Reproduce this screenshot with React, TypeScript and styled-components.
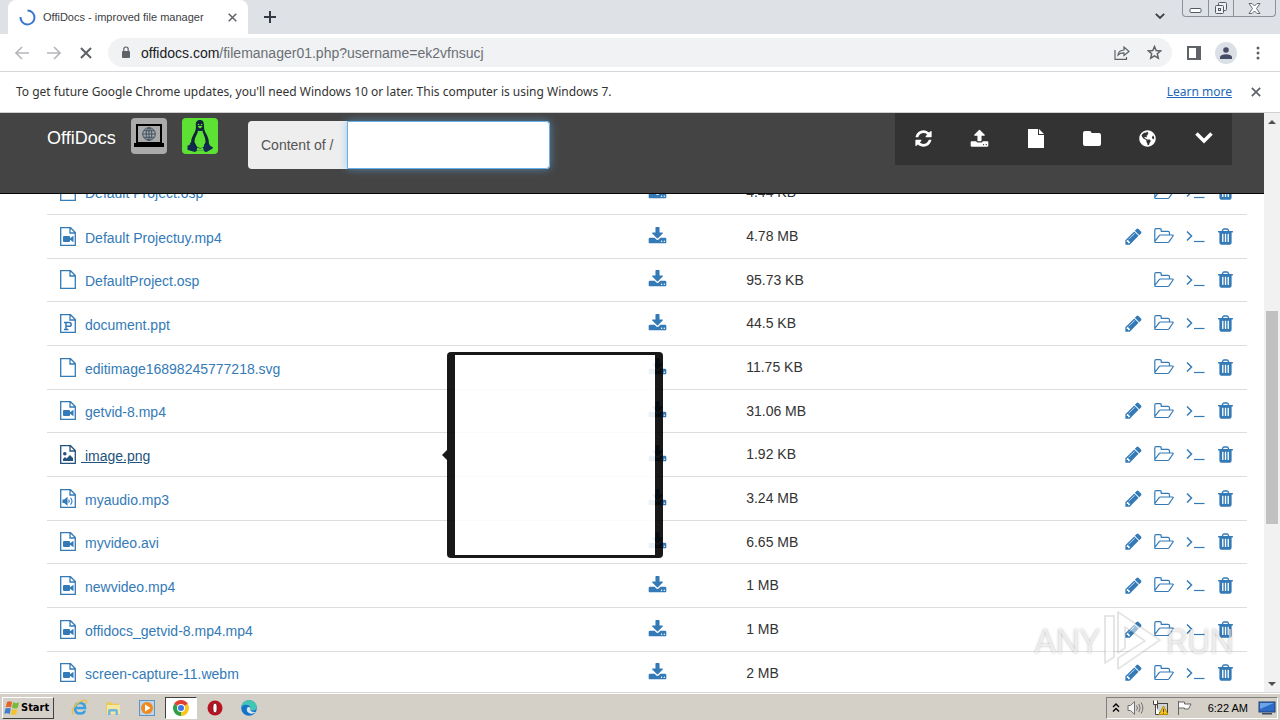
import React from "react";
import styled, { createGlobalStyle, css } from "styled-components";
import { FaGlobeAmericas } from "react-icons/fa";

const UI_FONT = '"Noto Sans", "Open Sans", sans-serif';
const PAGE_FONT = '"Liberation Sans", Arial, sans-serif';

const GlobalStyle = createGlobalStyle`
  *, *::before, *::after { box-sizing: border-box; }
  body { margin: 0; background: #fff; overflow: hidden; }
  button, input { font: inherit; }
  svg { display: block; flex: none; }
`;

const Desktop = styled.div`
  position: relative;
  display: flex;
  flex-direction: column;
  height: 100vh;
  font-family: ${PAGE_FONT};
  font-size: 12px;
  color: #333;
`;

/* ---------- Browser window ---------- */

const TabStrip = styled.header`
  display: flex;
  align-items: stretch;
  height: 34px;
  padding-left: 8px;
  background: #dee1e6;
`;

const Tab = styled.div`
  display: flex;
  align-items: center;
  width: 240px;
  margin-right: 5px;
  padding: 0 8px 0 11px;
  border-radius: 8px 8px 0 0;
  background: #fff;
  color: #3c4043;
  font-size: 11px;
`;

const TabTitle = styled.span`
  flex: 1;
  margin-left: 7px;
  white-space: nowrap;
`;

const IconButton = styled.button<{ $size?: number }>`
  display: inline-flex;
  align-items: center;
  justify-content: center;
  width: ${(p) => p.$size ?? 32}px;
  height: ${(p) => p.$size ?? 32}px;
  padding: 0;
  border: 0;
  background: none;
  color: #5f6368;
`;

const TabSpacer = styled.div`
  flex: 1;
`;

const WindowControls = styled.div`
  display: flex;
  height: 17px;
  margin: 0 4px 0 6px;
  border: 1px solid #8c9097;
  border-top: 0;
  border-radius: 0 0 4px 4px;
`;

const WindowButton = styled.button<{ $wide?: boolean }>`
  display: flex;
  align-items: center;
  justify-content: center;
  width: ${(p) => (p.$wide ? 42 : 25)}px;
  padding: 0;
  border: 0;
  background: none;
  & + & { border-left: 1px solid #8c9097; }
`;

const Toolbar = styled.nav`
  display: flex;
  align-items: center;
  height: 38px;
  padding: 0 6px;
  border-bottom: 1px solid #d5d7da;
  background: #fff;
`;

const AddressBar = styled.div`
  display: flex;
  flex: 1;
  align-items: center;
  height: 29px;
  margin: 0 6px 0 6px;
  padding: 0 2px 0 13px;
  border-radius: 15px;
  background: #f0f2f4;
`;

const AddressText = styled.span`
  flex: 1;
  margin-left: 10px;
  color: #6b6f74;
  font-size: 14px;
  b { color: #202124; font-weight: 400; }
`;

const Avatar = styled.span`
  display: flex;
  align-items: center;
  justify-content: center;
  width: 22px;
  height: 22px;
  border-radius: 50%;
  background: #dbdfe6;
`;

const InfoBar = styled.div`
  display: flex;
  align-items: center;
  height: 41px;
  padding: 0 8px 1px 16px;
  border-bottom: 1px solid #d0d0d0;
  background: #fff;
  font-family: ${UI_FONT};
`;

const InfoText = styled.p`
  flex: 1;
  margin: 0;
`;

const InfoLink = styled.a`
  margin-right: 8px;
  color: #2267b5;
`;

const Viewport = styled.div`
  display: flex;
  flex: 1;
  min-height: 0;
  border-bottom: 1px solid #d8d8d8;
`;

const Page = styled.main`
  display: flex;
  flex: 1;
  flex-direction: column;
  min-width: 0;
  background: #fff;
  font-size: 14px;
`;

/* ---------- File manager ---------- */

const PageHeader = styled.div`
  display: flex;
  align-items: flex-start;
  flex: none;
  height: 81px;
  padding: 0 32px 0 47px;
  border-bottom: 1px solid #080808;
  background: #444;
`;

const Brand = styled.a`
  width: 84px;
  margin-top: 15px;
  color: #fff;
  font-size: 18px;
  line-height: 21px;
  text-decoration: none;
`;

const AppTile = styled.a<{ $color: string }>`
  display: flex;
  align-items: center;
  justify-content: center;
  width: 36px;
  height: 36px;
  margin: 5px 15px 0 0;
  border-radius: 4px;
  background: ${(p) => p.$color};
`;

const PathGroup = styled.label`
  display: flex;
  height: 48px;
  margin: 8px auto 0 15px;
  border-radius: 4px;
  background: #eee;
  color: #555;
  line-height: 48px;
`;

const PathLabel = styled.span`
  width: 99px;
  padding-left: 13px;
  white-space: nowrap;
`;

const PathInput = styled.input`
  width: 203px;
  padding: 0 12px;
  border: 1px solid #66afe9;
  border-radius: 0 4px 4px 0;
  background: #fff;
  box-shadow: 0 0 8px rgba(102, 175, 233, 0.6);
  outline: 0;
`;

const ToolGroup = styled.div`
  display: flex;
  height: 52px;
  padding-left: 1px;
  background: #333;
`;

const ToolButton = styled.button`
  display: flex;
  align-items: center;
  justify-content: center;
  width: 56px;
  padding: 0 1px 2px 0;
  border: 0;
  background: none;
  color: #fff;
`;

const ListArea = styled.div`
  flex: 1;
  min-height: 0;
  padding: 0 17px 0 47px;
  overflow: hidden;
`;

const FileTable = styled.table`
  width: 100%;
  margin-top: -24px;
  border-collapse: collapse;
  table-layout: fixed;
`;

const Row = styled.tr`
  height: 44px;
  border-bottom: 1px solid #ddd;
  &:nth-child(3n) { height: 43px; }
`;

const Cell = styled.td<{ $width: string }>`
  position: relative;
  width: ${(p) => p.$width};
  padding: 0 8px;
  color: #333;
`;

const linkIcon = css`
  display: flex;
  align-items: center;
  width: max-content;
  padding: 0;
  border: 0;
  background: none;
  color: #337ab7;
`;

const FileLink = styled.a<{ $hover?: boolean }>`
  ${linkIcon}
  gap: ${(p) => (p.$hover ? 5 : 9)}px;
  padding-left: 5px;
  color: ${(p) => (p.$hover ? "#23527c" : "#337ab7")};
  text-decoration: none;
  span {
    padding-top: 3px;
    white-space: pre;
    text-decoration: ${(p) => (p.$hover ? "underline" : "none")};
  }
`;

const DownloadLink = styled.a`
  ${linkIcon}
`;

const Actions = styled.div`
  display: flex;
  align-items: center;
  justify-content: flex-end;
  gap: 11px;
  padding-right: 4px;
`;

const ActionButton = styled.button`
  ${linkIcon}
`;

const Preview = styled.div`
  position: absolute;
  top: calc(50% + 1px);
  left: 400px;
  z-index: 1;
  padding: 3px 8px;
  border-radius: 4px;
  background: #000;
  opacity: 0.9;
  transform: translateY(-50%);
  &::before {
    content: "";
    position: absolute;
    top: 50%;
    left: -5px;
    margin-top: -5px;
    border: 5px solid transparent;
    border-left: 0;
    border-right-color: #000;
  }
`;

const PreviewImage = styled.div`
  width: 200px;
  height: 200px;
  background: #fff;
`;

const Scrollbar = styled.div`
  display: flex;
  flex-direction: column;
  align-items: center;
  width: 16px;
  background: #f1f1f1;
`;

const ScrollArrow = styled.button`
  display: flex;
  align-items: center;
  justify-content: center;
  height: 17px;
  padding: 0;
  border: 0;
  background: none;
`;

const ScrollSpace = styled.div<{ $share: number }>`
  flex: ${(p) => p.$share} 0 0;
`;

const ScrollThumb = styled(ScrollSpace)`
  width: 12px;
  background: #c1c1c1;
`;

const Watermark = styled.div`
  position: absolute;
  right: 46px;
  bottom: 46px;
  z-index: 2;
  display: flex;
  align-items: center;
  gap: 3px;
  color: rgba(255, 255, 255, 0.6);
  font-family: Roboto, "Liberation Sans", sans-serif;
  font-size: 34px;
  font-weight: 300;
  line-height: 66px;
  text-shadow: 0 0 3px rgba(0, 0, 0, 0.3);
  pointer-events: none;
`;

/* ---------- Taskbar ---------- */

const Taskbar = styled.footer`
  display: flex;
  align-items: center;
  height: 27px;
  padding: 2px 2px 1px;
  border-top: 1px solid #fff;
  background: #d4d0c8;
  color: #000;
`;

const StartButton = styled.button`
  display: flex;
  align-items: center;
  gap: 1px;
  height: 22px;
  width: 52px;
  margin-right: 9px;
  padding: 0 1px;
  border: 1px solid;
  border-color: #fff #404040 #404040 #fff;
  background: #d4d0c8;
  font-family: "DejaVu Sans Condensed", "DejaVu Sans", sans-serif;
  font-size: 11px;
  font-weight: 700;
  color: #000;
`;

const TaskButton = styled.button<{ $active?: boolean }>`
  display: flex;
  align-items: center;
  justify-content: center;
  width: 32px;
  height: 22px;
  margin-right: 2px;
  padding: 0;
  border: 1px solid transparent;
  background: none;
  ${(p) =>
    p.$active &&
    css`
      border-color: #404040 #fff #fff #404040;
      background: #fff;
    `}
`;

const Tray = styled.div`
  display: flex;
  align-items: center;
  gap: 7px;
  height: 22px;
  margin-left: auto;
  padding: 0 1px 0 5px;
  border: 1px solid;
  border-color: #808080 #fff #fff #808080;
`;

const Clock = styled.time`
  margin: 0 3px 0 8px;
  font-size: 11px;
  white-space: nowrap;
`;

/* ---------- Icons ---------- */

const paths = {
  refresh:
    "M1639 1056q0 5-1 7-64 268-268 434.500t-478 166.500q-146 0-282.500-55t-243.500-157l-129 129q-19 19-45 19t-45-19-19-45v-448q0-26 19-45t45-19h448q26 0 45 19t19 45-19 45l-137 137q71 66 161 102t187 36q134 0 250-65t186-179q11-17 53-117 8-23 30-23h192q13 0 22.500 9.500t9.500 22.500zm25-800v448q0 26-19 45t-45 19h-448q-26 0-45-19t-19-45 19-45l138-138q-148-137-349-137-134 0-250 65t-186 179q-11 17-53 117-8 23-30 23h-199q-13 0-22.500-9.500t-9.500-22.500v-7q65-268 270-434.500t480-166.500q146 0 284 55.500t245 156.500l130-129q19-19 45-19t45 19 19 45z",
  upload:
    "M1344 1472q0-26-19-45t-45-19-45 19-19 45 19 45 45 19 45-19 19-45zm256 0q0-26-19-45t-45-19-45 19-19 45 19 45 45 19 45-19 19-45zm128-224v320q0 40-28 68t-68 28h-1472q-40 0-68-28t-28-68v-320q0-40 28-68t68-28h427q21 56 70.500 92t110.500 36h256q61 0 110.500-36t70.500-92h427q40 0 68 28t28 68zm-325-648q-17 40-59 40h-256v448q0 26-19 45t-45 19h-256q-26 0-45-19t-19-45v-448h-256q-42 0-59-40-17-39 14-69l448-448q18-19 45-19t45 19l448 448q31 30 14 69z",
  download:
    "M1344 1344q0-26-19-45t-45-19-45 19-19 45 19 45 45 19 45-19 19-45zm256 0q0-26-19-45t-45-19-45 19-19 45 19 45 45 19 45-19 19-45zm128-224v320q0 40-28 68t-68 28h-1472q-40 0-68-28t-28-68v-320q0-40 28-68t68-28h465l135 136q58 56 136 56t136-56l136-136h464q40 0 68 28t28 68zm-325-569q17 41-14 70l-448 448q-18 19-45 19t-45-19l-448-448q-31-29-14-70 17-39 59-39h256v-448q0-26 19-45t45-19h256q26 0 45 19t19 45v448h256q42 0 59 39z",
  pencil:
    "M491 1536l91-91-235-235-91 91v107h128v128h107zm523-928q0-22-22-22-10 0-17 7l-542 542q-7 7-7 17 0 22 22 22 10 0 17-7l542-542q7-7 7-17zm-54-192l416 416-832 832h-416v-416zm683 96q0 53-37 90l-166 166-416-416 166-165q36-38 90-38 53 0 91 38l235 234q37 39 37 91z",
  trash:
    "M704 1376v-704q0-14-9-23t-23-9h-64q-14 0-23 9t-9 23v704q0 14 9 23t23 9h64q14 0 23-9t9-23zm256 0v-704q0-14-9-23t-23-9h-64q-14 0-23 9t-9 23v704q0 14 9 23t23 9h64q14 0 23-9t9-23zm256 0v-704q0-14-9-23t-23-9h-64q-14 0-23 9t-9 23v704q0 14 9 23t23 9h64q14 0 23-9t9-23zm-544-992h448l-48-117q-7-9-17-11h-317q-10 2-17 11zm928 32v64q0 14-9 23t-23 9h-96v948q0 83-47 143.500t-113 60.500h-832q-66 0-113-58.500t-47-141.500v-952h-96q-14 0-23-9t-9-23v-64q0-14 9-23t23-9h309l70-167q15-37 54-63t79-26h320q40 0 79 26t54 63l70 167h309q14 0 23 9t9 23z",
};

const Glyph = ({ name }: { name: keyof typeof paths }) => (
  <svg width="19" height="19" viewBox="0 0 1792 1792" fill="currentColor" aria-hidden="true">
    <path d={paths[name]} />
  </svg>
);

const FolderOpenIcon = () => (
  <svg width="21" height="16" viewBox="0 0 21 16" fill="none" stroke="currentColor" strokeWidth="1.2" strokeLinejoin="round" aria-hidden="true">
    <path d="M.8 14V2Q.8.7 2 .7H6Q7.200.7 7.200 2V3.300H14Q15.500 3.300 15.500 5V7M.8 13.500 5 7.800Q5.600 7 6.500 7H18.500Q19.700 7 19 8L15.500 13.200Q14.700 14.500 13.500 14.500H1.800Q.8 14.500.8 13.500" />
  </svg>
);

const TerminalIcon = () => (
  <svg width="19" height="14" viewBox="0 0 19 14" fill="none" stroke="currentColor" strokeWidth="1.5" aria-hidden="true">
    <path d="M1 2.500 5.500 7 1 11.500" />
    <path d="M8 12.500H18.500" strokeWidth="1.200" />
  </svg>
);

type Kind = "file" | "video" | "image" | "audio" | "slides";

const FileIcon = ({ kind }: { kind: Kind }) => (
  <svg width="16" height="19" viewBox="0 0 16 19" fill="none" stroke="currentColor" strokeWidth="1.300" aria-hidden="true">
    <path d="M.7.7H10.500L15.300 5.500V18.300H.7ZM10 .7V6H15.300" />
    {kind === "video" && (
      <g fill="currentColor" stroke="none">
        <rect x="3" y="9" width="7" height="6" rx="1" />
        <path d="M9 12 13.500 8.800V15.200Z" />
      </g>
    )}
    {kind === "image" && (
      <g fill="currentColor" stroke="none">
        <circle cx="4.800" cy="8.800" r="1.800" />
        <path d="M3 16V14L5 12 6.500 13.500 10 10 13 13V16Z" />
      </g>
    )}
    {kind === "audio" && (
      <g strokeWidth="1.100">
        <path d="M3 11H4.500L7 9V15.500L4.500 13.500H3Z" fill="currentColor" />
        <path d="M8.600 10.600Q10 12.200 8.600 13.900M10.500 8.800Q13.500 12.200 10.500 15.700" />
      </g>
    )}
    {kind === "slides" && (
      <path d="M4 8.500H9Q11.200 8.500 11.200 10.400T9 12.300H6.500M6 8.500V15.500M4 15.500H8.500" strokeWidth="1.500" />
    )}
  </svg>
);

const CrossIcon = ({ size = 9 }: { size?: number }) => (
  <svg width={size} height={size} viewBox="0 0 10 10" stroke="currentColor" strokeWidth="1.700" aria-hidden="true">
    <path d="M.8.8 9.200 9.200M9.200.8.8 9.200" />
  </svg>
);

const ArrowIcon = ({ back }: { back?: boolean }) => (
  <svg width="14" height="14" viewBox="0 0 14 14" fill="none" stroke="#b5b7ba" strokeWidth="1.600" aria-hidden="true">
    <path d={back ? "M14 7H1M7 1 1 7 7 13" : "M0 7H13M7 1 13 7 7 13"} />
  </svg>
);

const LaptopIcon = () => (
  <svg width="30" height="26" viewBox="0 0 30 26" fill="none" aria-hidden="true">
    <rect x="3" y="2" width="24" height="18" stroke="#000" strokeWidth="2" />
    <path d="M0 20H30V24H0Z" fill="#000" />
    <g stroke="#3d5060" strokeWidth="1">
      <circle cx="15" cy="11" r="6.300" />
      <ellipse cx="15" cy="11" rx="2.800" ry="6.300" />
      <path d="M15 4.700V17.300M8.700 11H21.300M9.800 7.800H20.200M9.800 14.200H20.200" />
    </g>
  </svg>
);

const PenguinIcon = () => (
  <svg width="28" height="34" viewBox="0 0 28 34" aria-hidden="true">
    <path d="M14 1C10.500 1 9.500 3.500 9.900 7 10.200 11 9 12.500 7.200 16 5.500 19.200 5 21.500 5.200 24L9 31.500H19.500L22.800 25C23.200 21.500 22 18 20.200 14.800 18.600 12 18 10.500 18 7 18 3 17 1 14 1Z" fill="#10243a" />
    <path d="M12 11.500Q14 12.500 16.400 11.500C17 15 19.500 18 19.500 23L17.500 28Q14 30 10.800 27.500L8.500 23C8.500 18 11.500 16 12 11.500Z" fill="#5ee135" />
    <path d="M10 31.500 11.500 28.500Q14 30.500 17 28.500L18 31.500Z" fill="#5ee135" />
    <path d="M11.500 7.500Q14 5.800 16.700 7.500L14 9.500Z" fill="#5ee135" />
    <circle cx="12.500" cy="5.500" r=".8" fill="#5ee135" />
    <circle cx="15.600" cy="5.500" r=".8" fill="#5ee135" />
    <path d="M4.500 23.500Q6 22.500 7 24L10.700 29.500Q11.500 32.500 8.800 33L2 31Q.8 30.500 1.600 28.800L1.500 26.500 3.500 26Z" fill="#102a50" />
    <path d="M18.200 25Q20 26.500 22.500 23.500L24 26.500 27 28.500Q27.300 29.500 25 30.500L20.500 33Q17.800 33.300 17.800 30.500Z" fill="#102a50" />
  </svg>
);

/* ---------- Data ---------- */

interface Entry {
  name: string;
  size: string;
  kind: Kind;
  editable?: boolean;
  hovered?: boolean;
}

const files: Entry[] = [
  { name: "Default Project.osp", size: "4.44 KB", kind: "file" },
  { name: "Default Projectuy.mp4", size: "4.78 MB", kind: "video", editable: true },
  { name: "DefaultProject.osp", size: "95.73 KB", kind: "file" },
  { name: "document.ppt", size: "44.5 KB", kind: "slides", editable: true },
  { name: "editimage16898245777218.svg", size: "11.75 KB", kind: "file" },
  { name: "getvid-8.mp4", size: "31.06 MB", kind: "video", editable: true },
  { name: "image.png", size: "1.92 KB", kind: "image", editable: true, hovered: true },
  { name: "myaudio.mp3", size: "3.24 MB", kind: "audio", editable: true },
  { name: "myvideo.avi", size: "6.65 MB", kind: "video", editable: true },
  { name: "newvideo.mp4", size: "1 MB", kind: "video", editable: true },
  { name: "offidocs_getvid-8.mp4.mp4", size: "1 MB", kind: "video", editable: true },
  { name: "screen-capture-11.webm", size: "2 MB", kind: "video", editable: true },
];

const FileRow = ({ file }: { file: Entry }) => (
  <Row>
    <Cell $width="49.4%">
      <FileLink href="#" $hover={file.hovered}>
        <FileIcon kind={file.kind} />
        <span>{file.hovered ? ` ${file.name}` : file.name}</span>
      </FileLink>
      {file.hovered && (
        <Preview role="tooltip">
          <PreviewImage />
        </Preview>
      )}
    </Cell>
    <Cell $width="8.2%">
      <DownloadLink href="#" aria-label={`Download ${file.name}`}>
        <Glyph name="download" />
      </DownloadLink>
    </Cell>
    <Cell $width="15%">{file.size}</Cell>
    <Cell $width="27.4%">
      <Actions>
        {file.editable && (
          <ActionButton aria-label="Edit"><Glyph name="pencil" /></ActionButton>
        )}
        <ActionButton aria-label="Open"><FolderOpenIcon /></ActionButton>
        <ActionButton aria-label="Rename"><TerminalIcon /></ActionButton>
        <ActionButton aria-label="Delete"><Glyph name="trash" /></ActionButton>
      </Actions>
    </Cell>
  </Row>
);

const BrowserChrome = () => (
  <>
    <TabStrip>
      <Tab>
        <svg width="17" height="17" viewBox="0 0 17 17" fill="none" stroke="#3a76d0" strokeWidth="2" aria-hidden="true">
          <path d="M8.500 1.500A7 7 0 1 1 1.500 8" />
        </svg>
        <TabTitle>OffiDocs - improved file manager</TabTitle>
        <IconButton $size={16} aria-label="Close tab"><CrossIcon /></IconButton>
      </Tab>
      <IconButton $size={34} aria-label="New tab">
        <svg width="12" height="12" viewBox="0 0 12 12" stroke="#333a45" strokeWidth="2" aria-hidden="true">
          <path d="M6 0V12M0 6H12" />
        </svg>
      </IconButton>
      <TabSpacer />
      <IconButton $size={32} aria-label="Search tabs">
        <svg width="10" height="6" viewBox="0 0 10 6" fill="none" stroke="#3c4043" strokeWidth="1.800" aria-hidden="true">
          <path d="M.8.8 5 5 9.200.8" />
        </svg>
      </IconButton>
      <WindowControls>
        <WindowButton aria-label="Minimize">
          <svg width="13" height="17" viewBox="0 0 13 17" fill="#fff" stroke="#555b66" aria-hidden="true">
            <rect x="1" y="8.500" width="11" height="4" rx="1" />
          </svg>
        </WindowButton>
        <WindowButton aria-label="Restore">
          <svg width="14" height="14" viewBox="0 0 14 14" fill="#eef0f4" stroke="#555b66" aria-hidden="true">
            <rect x="4.500" y="1.500" width="8" height="8" rx="1" />
            <rect x="1.500" y="4.500" width="8" height="8" rx="1" />
            <rect x="4.500" y="7.500" width="2" height="2" />
          </svg>
        </WindowButton>
        <WindowButton $wide aria-label="Close">
          <svg width="13" height="11" viewBox="0 0 13 11" fill="#fff" stroke="#555b66" strokeWidth=".9" aria-hidden="true">
            <path d="M1 .5H4L6.500 3 9 .5H12L8.500 5.500 12 10.500H9L6.500 8 4 10.500H1L4.500 5.500Z" />
          </svg>
        </WindowButton>
      </WindowControls>
    </TabStrip>
    <Toolbar>
      <IconButton aria-label="Back"><ArrowIcon back /></IconButton>
      <IconButton aria-label="Forward"><ArrowIcon /></IconButton>
      <IconButton aria-label="Stop loading"><CrossIcon size={12} /></IconButton>
      <AddressBar>
        <svg width="10" height="13" viewBox="0 0 10 13" fill="#5f6368" aria-hidden="true">
          <rect x="1" y="5" width="8" height="7" rx="1" />
          <path d="M2.800 5.500V3.200A2.200 2.200 0 0 1 7.200 3.200V5.500" fill="none" stroke="#5f6368" strokeWidth="1.200" />
        </svg>
        <AddressText><b>offidocs.com</b>/filemanager01.php?username=ek2vfnsucj</AddressText>
        <IconButton aria-label="Share">
          <svg width="16" height="14" viewBox="0 0 16 14" fill="none" stroke="currentColor" strokeWidth="1.200" aria-hidden="true">
            <path d="M1 4V13.300H12.500V11M4 9Q4.500 4.300 10 4V1L15 5.500 10 9.500V6.800Q6 6.700 4 9Z" />
          </svg>
        </IconButton>
        <IconButton aria-label="Bookmark">
          <svg width="15" height="15" viewBox="0 0 15 15" fill="none" stroke="currentColor" strokeWidth="1.500" aria-hidden="true">
            <path d="M7.500 1.500 9.200 5.500 13.600 5.900 10.300 8.800 11.300 13.200 7.500 10.900 3.700 13.200 4.700 8.800 1.400 5.900 5.800 5.500Z" />
          </svg>
        </IconButton>
      </AddressBar>
      <IconButton aria-label="Side panel">
        <svg width="14" height="14" viewBox="0 0 14 14" fill="none" stroke="currentColor" strokeWidth="2" aria-hidden="true">
          <rect x="1" y="1" width="12" height="12" />
          <path d="M11 1V13" strokeWidth="4" />
        </svg>
      </IconButton>
      <IconButton aria-label="Profile">
        <Avatar>
          <svg width="12" height="12" viewBox="0 0 12 12" fill="#454e66" aria-hidden="true">
            <circle cx="6" cy="3" r="2.800" />
            <path d="M0 12V9.800Q1 7.200 6 7.200T12 9.800V12Z" />
          </svg>
        </Avatar>
      </IconButton>
      <IconButton aria-label="Menu">
        <svg width="4" height="14" viewBox="0 0 4 14" fill="currentColor" aria-hidden="true">
          <circle cx="2" cy="2" r="1.500" /><circle cx="2" cy="7" r="1.500" /><circle cx="2" cy="12" r="1.500" />
        </svg>
      </IconButton>
    </Toolbar>
    <InfoBar>
      <InfoText>To get future Google Chrome updates, you'll need Windows 10 or later. This computer is using Windows 7.</InfoText>
      <InfoLink href="#">Learn more</InfoLink>
      <IconButton aria-label="Dismiss"><CrossIcon size={10} /></IconButton>
    </InfoBar>
  </>
);

const ManagerHeader = () => (
  <PageHeader>
    <Brand href="#">OffiDocs</Brand>
    <AppTile href="#" $color="#aaa" aria-label="Web desktop"><LaptopIcon /></AppTile>
    <AppTile href="#" $color="#5ee135" aria-label="Linux apps"><PenguinIcon /></AppTile>
    <PathGroup>
      <PathLabel>Content of /</PathLabel>
      <PathInput type="text" />
    </PathGroup>
    <ToolGroup>
      <ToolButton aria-label="Refresh"><Glyph name="refresh" /></ToolButton>
      <ToolButton aria-label="Upload"><Glyph name="upload" /></ToolButton>
      <ToolButton aria-label="New file">
        <svg width="16" height="19" viewBox="0 0 16 19" fill="currentColor" aria-hidden="true">
          <path d="M0 0H10V6H16V19H0ZM11 0 16 5H11Z" />
        </svg>
      </ToolButton>
      <ToolButton aria-label="New folder">
        <svg width="18" height="15" viewBox="0 0 18 15" fill="currentColor" aria-hidden="true">
          <path d="M2 0H6.500Q8.500 0 8.500 2H16Q18 2 18 4V13Q18 15 16 15H2Q0 15 0 13V2Q0 0 2 0Z" />
        </svg>
      </ToolButton>
      <ToolButton aria-label="Language"><FaGlobeAmericas size={17} /></ToolButton>
      <ToolButton aria-label="More">
        <svg width="18" height="12" viewBox="0 0 18 12" fill="none" stroke="currentColor" strokeWidth="3.500" aria-hidden="true">
          <path d="M1.500 1.500 9 9 16.500 1.500" />
        </svg>
      </ToolButton>
    </ToolGroup>
  </PageHeader>
);

const SystemBar = () => (
  <Taskbar>
    <StartButton>
      <svg width="16" height="16" viewBox="0 0 16 16" aria-hidden="true">
        <path d="M3 2Q5.500.5 8 2L7 7.500Q4.500 6.200 1.800 7.500Z" fill="#e5632a" />
        <path d="M9 2.300Q12 3.800 15 2.300L13.800 7.800Q11 9 8 7.800Z" fill="#7cb83c" />
        <path d="M1.500 8.500Q4.500 7.300 6.800 8.600L5.700 14Q3 12.500.3 13.800Z" fill="#3f7fd0" />
        <path d="M7.800 8.900Q10.500 10.200 13.500 9L12.300 14.200Q9.500 15.500 6.700 14.200Z" fill="#f4c430" />
      </svg>
      Start
    </StartButton>
    <TaskButton aria-label="Internet Explorer">
      <svg width="17" height="17" viewBox="0 0 17 17" fill="none" aria-hidden="true">
        <path d="M4.500 9H14Q14 4 9 4T4 9.300 9 14.500 13.500 11.500" stroke="#3ba0e0" strokeWidth="2.600" />
        <path d="M2.500 15.500C-1 13 4 4 11 1.700 16 .3 16 2.500 15 5" stroke="#e9c04c" strokeWidth="1.500" />
      </svg>
    </TaskButton>
    <TaskButton aria-label="Windows Explorer">
      <svg width="16" height="16" viewBox="0 0 16 16" aria-hidden="true">
        <path d="M1 2H6L7 3.500H14V13H1Z" fill="#e8ca62" />
        <path d="M2 5H15V14H2Z" fill="#f7e6a0" />
        <path d="M3 15V11Q3 9 5 9H11Q13 9 13 11V15H10.500V11.500H5.500V15Z" fill="#70b7dc" />
      </svg>
    </TaskButton>
    <TaskButton aria-label="Media Player">
      <svg width="16" height="16" viewBox="0 0 16 16" aria-hidden="true">
        <rect x=".5" y=".5" width="15" height="15" fill="#b9d6ee" stroke="#5f93c0" />
        <circle cx="8" cy="8" r="6" fill="#ef8a1d" />
        <path d="M6 4.500 11.500 8 6 11.500Z" fill="#fff" />
      </svg>
    </TaskButton>
    <TaskButton $active aria-label="Google Chrome">
      <svg width="16" height="16" viewBox="0 0 16 16" aria-hidden="true">
        <path d="M8 8 1.100 4A8 8 0 0 1 14.900 4Z" fill="#e0402f" />
        <path d="M8 8 14.900 4A8 8 0 0 1 8 16Z" fill="#fbc51b" />
        <path d="M8 8V16A8 8 0 0 1 1.100 4Z" fill="#2e9e4b" />
        <circle cx="8" cy="8" r="4" fill="#fff" />
        <circle cx="8" cy="8" r="3" fill="#3b78e0" />
      </svg>
    </TaskButton>
    <TaskButton aria-label="Opera">
      <svg width="16" height="16" viewBox="0 0 16 16" aria-hidden="true">
        <circle cx="8" cy="8" r="7.500" fill="#b81320" />
        <ellipse cx="8" cy="8" rx="2.200" ry="5" fill="#fff" stroke="#7c0a12" />
      </svg>
    </TaskButton>
    <TaskButton aria-label="Microsoft Edge">
      <svg width="16" height="16" viewBox="0 0 16 16" aria-hidden="true">
        <circle cx="8" cy="8" r="7.800" fill="#1673c8" />
        <path d="M.3 7.500C1 2.500 4.500.2 8 .2 13 .2 15.800 4 15.800 7 15.800 10 12 11.500 9.500 10 10.500 7 8 4.800 5 4.800 2.500 4.800 1 6 .3 7.500Z" fill="#42c6b4" />
        <path d="M6 8Q5 12 9 13.500 12 14.500 14.500 12 11 12.500 9.500 10.500 9 9.800 9.700 8.500Q8 6 6 8Z" fill="#d4e6ee" />
      </svg>
    </TaskButton>
    <Tray>
      <svg width="8" height="10" viewBox="0 0 8 10" fill="none" stroke="#000" strokeWidth="1.400" aria-hidden="true">
        <path d="M1 4 4 1 7 4M1 8.500 4 5.500 7 8.500" />
      </svg>
      <svg width="18" height="14" viewBox="0 0 18 14" fill="none" stroke="#707070" aria-hidden="true">
        <path d="M1 4.500H3.500L7.500.7V13.300L3.500 9.500H1Z" fill="#f5f5f5" />
        <path d="M9.500 4.500Q11.500 7 9.500 9.500M11.800 3Q14.500 7 11.800 11M14 1.500Q17.800 7 14 12.500" />
      </svg>
      <svg width="17" height="16" viewBox="0 0 17 16" fill="none" stroke="#444" aria-hidden="true">
        <rect x="5.500" y="3.500" width="10" height="9" fill="#cfd3d6" />
        <path d="M1.500.5V4.500H5.500V.5M3.500 4.500V14.500H8" fill="#fff" />
        <path d="M11.500 6 16 14.500H7Z" fill="#f5c518" stroke="#b98e00" />
        <path d="M11.500 9V12M11.500 12.800V13.800" />
      </svg>
      <svg width="17" height="16" viewBox="0 0 17 16" fill="#fff" stroke="#666" aria-hidden="true">
        <path d="M2.500 1V15M2.500 2H8.500V4H15L12.500 9H8.500V8H2.500Z" />
      </svg>
      <Clock>6:22 AM</Clock>
      <svg width="18" height="14" viewBox="0 0 18 14" aria-hidden="true">
        <rect x="1" y="1" width="16" height="10" fill="#2c6cc8" stroke="#24406c" />
        <path d="M2 2H16L2 8Z" fill="#6ba4e8" />
        <path d="M4 12H14V13.500H4Z" fill="#3b4a60" />
      </svg>
    </Tray>
  </Taskbar>
);

export default function App() {
  return (
    <Desktop>
      <GlobalStyle />
      <BrowserChrome />
      <Viewport>
        <Page>
          <ManagerHeader />
          <ListArea>
            <FileTable>
              <tbody>
                {files.map((file) => (
                  <FileRow key={file.name} file={file} />
                ))}
              </tbody>
            </FileTable>
          </ListArea>
        </Page>
        <Scrollbar>
          <ScrollArrow aria-label="Scroll up">
            <svg width="8" height="4" viewBox="0 0 8 4" fill="#505050" aria-hidden="true"><path d="M4 0 8 4H0Z" /></svg>
          </ScrollArrow>
          <ScrollSpace $share={181} />
          <ScrollThumb $share={212} />
          <ScrollSpace $share={151} />
          <ScrollArrow aria-label="Scroll down">
            <svg width="8" height="4" viewBox="0 0 8 4" fill="#505050" aria-hidden="true"><path d="M0 0H8L4 4Z" /></svg>
          </ScrollArrow>
        </Scrollbar>
      </Viewport>
      <SystemBar />
      <Watermark>
        <span>ANY</span>
        <svg width="60" height="64" viewBox="0 0 60 64" fill="none" stroke="#000" strokeOpacity=".1" strokeWidth="2" strokeLinejoin="round" aria-hidden="true">
          <path d="M2 7H11V48L2 54ZM15 3 57 31 15 60V49L42 32 22 18V39L15 44Z" fill="#fff" fillOpacity=".5" />
        </svg>
        <span>RUN</span>
      </Watermark>
    </Desktop>
  );
}
